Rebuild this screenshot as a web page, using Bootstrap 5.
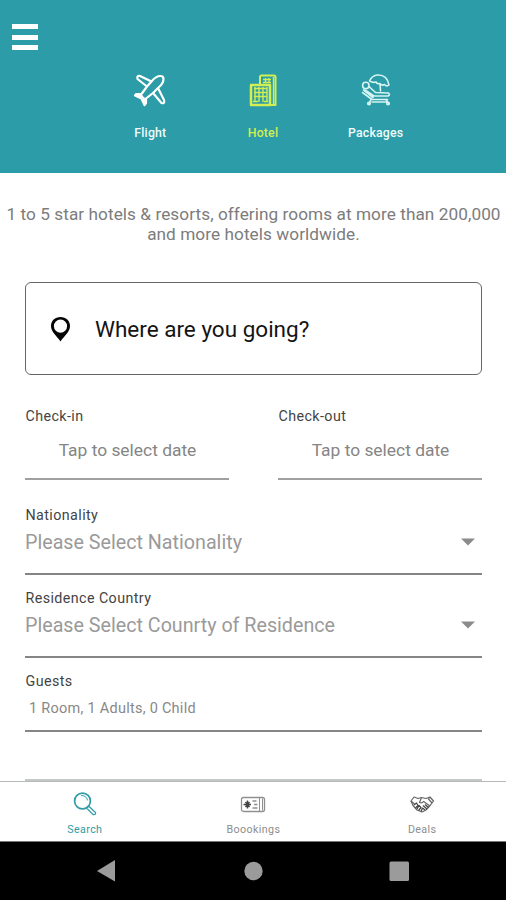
<!DOCTYPE html>
<html lang="en">
<head>
<meta charset="utf-8">
<meta name="viewport" content="width=device-width, initial-scale=1">
<title>Hotel search</title>
<link href="https://cdn.jsdelivr.net/npm/bootstrap@5.3.0/dist/css/bootstrap.min.css" rel="stylesheet">
<style>
body{font-family:Roboto,"Liberation Sans",sans-serif;background:#fff;color:#333;line-height:20px}
.screen{height:900px}
.topbar{height:173px;background:#2b9ca8;padding:24px 12px 0}
.burger{width:26px;height:26px}
.burger span{height:5px;background:#fff}
.modes{width:338px;margin:22px 0 0 82px}
.mode{width:112.67px;color:#f0fbfb;font-size:12.3px;font-weight:500;letter-spacing:.2px}
.mode.current{color:#d3ee50}
.mode svg{width:36px;height:36px;margin-bottom:15px}
.intro{height:109px;padding:31px 0 0 1px;font-size:17.2px;letter-spacing:.07px;color:#7c7c7c;white-space:nowrap}
.form-area{height:608px}
.fields{padding:0 24px 0 25px}
.where{height:93px;border:1.4px solid #666;border-radius:6px;padding-left:24px;font-size:22.5px;color:#141414;gap:24px}
.dates{gap:49px;height:106px;margin-top:30px}
.date-field{height:75px;border-bottom:2px solid #a0a0a0}
.field-label{font-size:14.3px;letter-spacing:.4px;color:#444;line-height:22px;padding-left:.5px}
.date-value{font-size:17.4px;color:#858585;margin-top:12px;padding-left:1px;line-height:22px}
.pick{height:83px;border-bottom:2px solid #858585}
.pick.first{height:71px;margin-top:-7px}
.pick .field-label{padding-top:12px}
.pick.first .field-label{padding-top:0}
.pick-value{font-size:19.7px;color:#9a9a9a;line-height:24px;margin-top:5px;padding-right:7px}
.pick-value svg{margin-top:-2px}
.guest{height:74px;border-bottom:2px solid #858585}
.guest .field-label{padding-top:12px}
.guest-value{font-size:14.5px;letter-spacing:.26px;color:#888;margin-top:7px;padding-left:4px}
.next-line{height:2px;background:#c3c9c7}
.tabs{height:61px;border-top:1.5px solid #b5b9b9;border-bottom:1px solid #777}
.tab{font-size:10.7px;letter-spacing:.38px;color:#8d8d8d;line-height:14px;padding:9px 0 0 1px}
.tab svg{width:28px;height:28px;margin-bottom:4px}
.tab.current{color:#309ca5}
.system{height:58px;background:#000}
</style>
</head>
<body>
<div class="screen d-flex flex-column overflow-hidden">
<header class="topbar flex-shrink-0">
  <div class="burger d-flex flex-column justify-content-between"><span></span><span></span><span></span></div>
  <nav class="modes d-flex text-center">
    <div class="mode d-flex flex-column align-items-center">
      <svg viewBox="0 0 36 36" fill="none" stroke="#fff" stroke-width="2.200" stroke-linejoin="round" stroke-linecap="round"><path d="M28.500 4Q31.500 4 31.500 7C31.500 11 28.500 14 26 16L32 28Q33 32 29.500 31L21 21L14 26.500L14 31L12.500 33L9.500 26.500L3 23.500L4 22L9.500 22L15 14.500L5.500 7Q4.500 3.500 8 4L19.500 9.500C21.500 7 24.500 4 28.500 4ZM15 14.500L19.500 9.500M21 21L26 16"/><path d="M4.500 22.800L10 24.500M13 31L11.500 26" stroke-width="2.400"/></svg>
      <span>Flight</span>
    </div>
    <div class="mode current d-flex flex-column align-items-center">
      <svg viewBox="0 0 36 36" fill="none" stroke="#d3ee50" stroke-width="2" stroke-linejoin="round"><path d="M15 12.500V5Q15 3.500 16.500 3.500H29Q30.500 3.500 30.500 5V33H25.500"/><path d="M28.500 5V32" stroke-width="1.400"/><path d="M6 13H25V33H6Z" stroke-width="2.500"/><path d="M9 16.500H22.500M9 20.500H22.500M9 24.500H22.500M10 15V30M14 15V30M18 15V30M22 15V30M8 29.500H13M19 29.500H23" stroke-width="1.400"/><path d="M18 7.500H26M20.500 6V11M24 6V11M18 10.500H26" stroke-width="1.300"/></svg>
      <span>Hotel</span>
    </div>
    <div class="mode d-flex flex-column align-items-center">
      <svg viewBox="0 0 36 36" fill="none" stroke="#d5f5f3" stroke-width="1.600" stroke-linejoin="round" stroke-linecap="round"><path d="M11.500 9Q14 3.500 19.500 3Q29 2.500 31 13Q28.500 15 26.500 12.500Q24 14 22 11.500Q19.500 12.500 18 10Q15 11 11.500 9ZM22 11.500L22.500 19"/><circle cx="7.800" cy="13.500" r="3.200"/><path d="M11 14.500L17.500 20.500L30.500 21Q32.500 23 30 24H16L7 18M4.500 20.500L14 27.500H29.500M5.500 18L15 25.500"/><path d="M13 27.500L11 31.500M28 27.500L30.500 31.500M14 30H28"/><circle cx="11" cy="31.500" r="1.300"/><circle cx="30" cy="31.500" r="1.300"/></svg>
      <span>Packages</span>
    </div>
  </nav>
</header>
<main class="form-area flex-shrink-0 d-flex flex-column">
  <p class="intro text-center mb-0">1 to 5 star hotels &amp; resorts, offering rooms at more than 200,000<br>and more hotels worldwide.</p>
  <div class="fields flex-grow-1 d-flex flex-column">
    <div class="where d-flex align-items-center flex-shrink-0">
      <svg width="21" height="26" viewBox="0 0 21 26"><path fill="#050505" fill-rule="evenodd" d="M10.500 1C5 1 1 4.800 1 10C1 16 6.500 19.500 10.500 25.500C14.500 19.500 20 16 20 10C20 4.800 16 1 10.500 1ZM10.500 3.500A6.600 6.600 0 1 0 10.500 16.700A6.600 6.600 0 1 0 10.500 3.500Z"/></svg>
      <span>Where are you going?</span>
    </div>
    <div class="dates d-flex flex-shrink-0">
      <div class="date-field flex-fill w-50"><div class="field-label">Check-in</div><div class="date-value text-center">Tap to select date</div></div>
      <div class="date-field flex-fill w-50"><div class="field-label">Check-out</div><div class="date-value text-center">Tap to select date</div></div>
    </div>
    <div class="pick first flex-shrink-0">
      <div class="field-label">Nationality</div>
      <div class="pick-value d-flex justify-content-between align-items-center"><span>Please Select Nationality</span><svg width="14" height="8" viewBox="0 0 14 8"><path d="M0 .5H14L7 7.500Z" fill="#8b8b8b"/></svg></div>
    </div>
    <div class="pick flex-shrink-0">
      <div class="field-label">Residence Country</div>
      <div class="pick-value d-flex justify-content-between align-items-center"><span>Please Select Counrty of Residence</span><svg width="14" height="8" viewBox="0 0 14 8"><path d="M0 .5H14L7 7.500Z" fill="#8b8b8b"/></svg></div>
    </div>
    <div class="guest flex-shrink-0">
      <div class="field-label">Guests</div>
      <div class="guest-value">1 Room, 1 Adults, 0 Child</div>
    </div>
    <div class="next-line mt-auto"></div>
  </div>
</main>
<nav class="tabs d-flex flex-shrink-0 text-center">
  <div class="tab current col-4 d-flex flex-column align-items-center">
    <svg viewBox="0 0 28 28" fill="none" stroke="#309ca5" stroke-linecap="round"><circle cx="11.500" cy="10" r="7.900" stroke-width="1.700"/><path d="M10.500 4.500Q15.500 4.500 16.500 9" stroke-width="1"/><path d="M15.500 17L17.500 15L24.500 21.500Q25 24 22 23.500Z" stroke-width="1.300"/></svg>
    <span>Search</span>
  </div>
  <div class="tab col-4 d-flex flex-column align-items-center">
    <svg viewBox="0 0 28 28" fill="none" stroke="#909090"><rect x="2.500" y="6.500" width="23" height="14" rx="2" stroke-width="1.300"/><path d="M20.500 6.500V20.500M23.500 7.500V19.500"/><path d="M4.500 13.500H12M8.500 9.500V17.500M6.500 11L10.500 16M10.500 11L6.500 16" stroke="#444" stroke-width="1.400"/><path d="M13.500 10H17.500M15 13.500H18.500M13.500 17H18.500" stroke-width="1.500"/></svg>
    <span>Boookings</span>
  </div>
  <div class="tab col-4 d-flex flex-column align-items-center">
    <svg viewBox="0 0 28 28" fill="none" stroke="#666" stroke-width="1.200" stroke-linejoin="round"><path d="M3 10L6 6L10 7.500L13.500 6.500L18 7.500L22 6L25.500 10L22.500 14L18 19L14 21L9 19L5 14.500Z"/><path d="M13.500 6.500L11.500 11.500Q14 12.500 15.500 10.500L22 15M3 10L6.500 13M22 6L20.500 8L24 12"/><path d="M6 14L8.500 12L10 14.500L7.500 17M9 18L11 14.500L13 16.500L10.500 19.500M13 20.500L14.500 17L17 19M15 14.500L19 18M17 13.500L20.500 16.500" stroke="#444"/></svg>
    <span>Deals</span>
  </div>
</nav>
<footer class="system flex-shrink-0">
  <svg class="d-block" width="506" height="58" viewBox="0 0 506 58" fill="#9b9b9b"><path d="M97 29L115 18V39.500Z"/><circle cx="253.500" cy="29" r="9.200"/><rect x="389.500" y="19.500" width="19.500" height="19.500" rx="1.500"/></svg>
</footer>
</div>
<script src="https://cdn.jsdelivr.net/npm/bootstrap@5.3.0/dist/js/bootstrap.bundle.min.js"></script>
</body>
</html>
